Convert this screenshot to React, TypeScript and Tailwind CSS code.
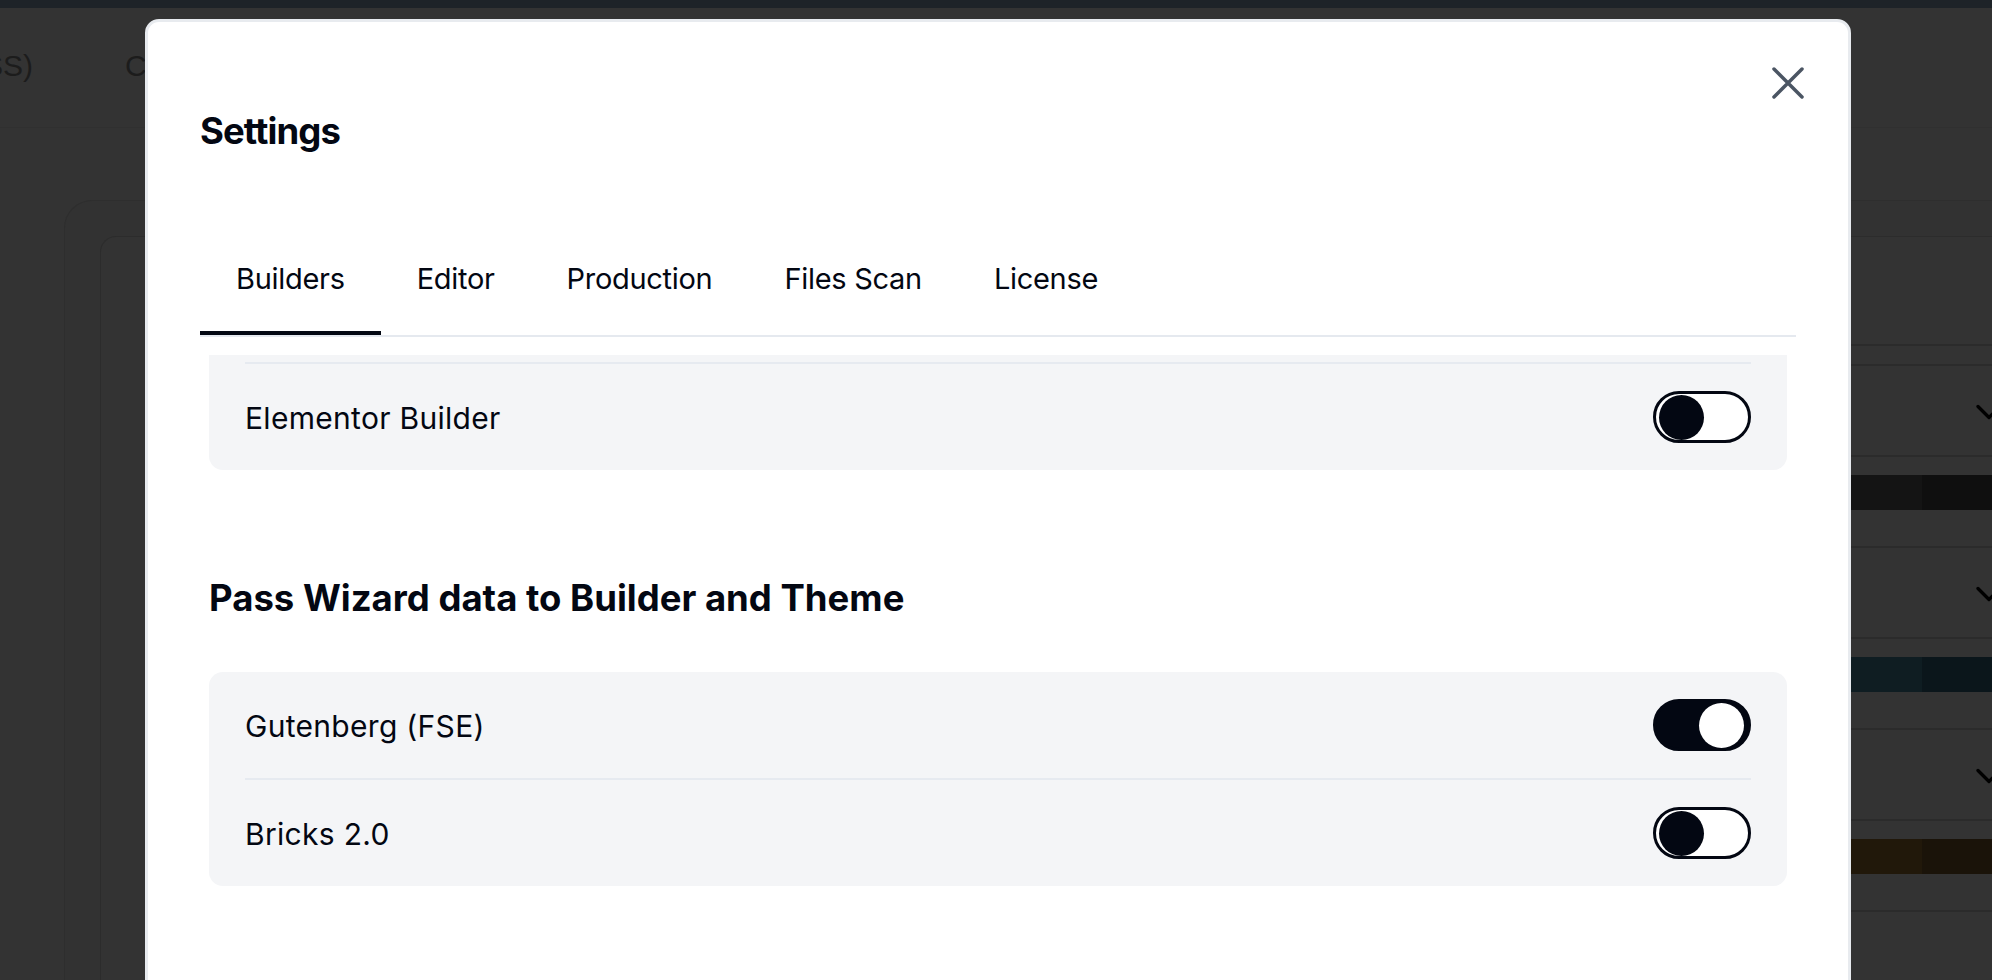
import clsx from "clsx";

const tabs = ["Builders", "Editor", "Production", "Files Scan", "License"];

// swatch strips that peek out to the right of the dialog
const swatchRows = [
  ["#181818", "#141414", "#0f0f0f"],
  ["#12222a", "#0f1d22", "#0b161b"],
  ["#271c0c", "#21180a", "#1a1309"],
];

function Toggle({ on }: { on: boolean }) {
  return (
    <span
      className={clsx(
        "flex h-[52px] w-[98px] shrink-0 items-center rounded-full border-[3px] border-[#030712]",
        on ? "justify-end bg-[#030712] pr-[4px]" : "bg-white pl-[3px]"
      )}
    >
      <span className={clsx("h-[45px] w-[45px] rounded-full", on ? "bg-white" : "bg-[#030712]")} />
    </span>
  );
}

function Row({ label, on }: { label: string; on: boolean }) {
  return (
    <div className="flex h-[106px] items-center justify-between px-[36px]">
      <span className="pt-[2px] text-[30px] leading-[36px] tracking-[0.3px] text-[#030712]">{label}</span>
      <Toggle on={on} />
    </div>
  );
}

const Divider = () => <div className="mx-[36px] h-[2px] bg-[#e6eaf0]" />;

// scrolledPast: the list is scrolled so the card's top edge sits above the viewport
function Card({ rows, scrolledPast }: { rows: { label: string; on: boolean }[]; scrolledPast?: boolean }) {
  return (
    <div className={clsx("bg-[#f4f5f7]", scrolledPast ? "rounded-b-[14px]" : "rounded-[14px]")}>
      {scrolledPast && (
        <>
          <div className="h-[7px]" />
          <Divider />
        </>
      )}
      {rows.map((r, i) => (
        <div key={r.label}>
          {i > 0 && <Divider />}
          <Row label={r.label} on={r.on} />
        </div>
      ))}
    </div>
  );
}

function ChevronDown() {
  return (
    <svg width="44" height="44" viewBox="0 0 24 24" fill="none" stroke="#000" strokeWidth="1.8" strokeLinecap="round" strokeLinejoin="round" className="mr-[-17px]">
      <path d="m6 9 6 6 6-6" />
    </svg>
  );
}

export default function App() {
  return (
    <div className="relative h-[980px] w-full overflow-hidden bg-[#333333] font-['Inter',sans-serif]">
      {/* page underneath the overlay */}
      <div className="h-[8px] bg-[#1e2328]" />
      <div className="flex h-[120px] items-center gap-[92px] border-b border-[#303030] pb-[4px] font-['Liberation_Sans',sans-serif] text-[30px] text-[#1c1c1c]">
        <div className="flex w-[33px] justify-end overflow-hidden whitespace-nowrap">Framework (CSS)</div>
        <div className="whitespace-nowrap">Colors</div>
      </div>
      <div className="pt-[72px]">
        <div className="ml-[64px] mr-[-38px] h-[900px] rounded-tl-[28px] border-l border-t border-[#2e2e2e] bg-[#323232] pt-[35px]">
          <div className="ml-[35px] mr-[36px] h-[900px] rounded-tl-[16px] border-l border-t border-[#2c2c2c] bg-[#333333]">
            <div className="ml-[120px]">
              <div className="h-[109px] border-b-2 border-[#2b2b2b]" />
              <div className="h-[20px] border-b-2 border-[#2b2b2b]" />
              {swatchRows.map((sw, i) => (
                <div key={i}>
                  <div className="flex h-[91px] items-center justify-end border-b-2 border-[#2b2b2b] pt-[2px]">
                    <ChevronDown />
                  </div>
                  <div className="flex h-[91px] items-start justify-end border-b-2 border-[#2b2b2b] pt-[18px]">
                    {sw.map((c) => (
                      <div key={c} className="h-[35px] w-[72px]" style={{ backgroundColor: c }} />
                    ))}
                  </div>
                </div>
              ))}
            </div>
          </div>
        </div>
      </div>

      {/* settings dialog */}
      <div className="absolute left-[145px] top-[19px] h-[1100px] w-[1706px] rounded-[14px] border-[3px] border-[#e8ebef] bg-white">
        <button className="absolute right-[44px] top-[45px]">
          <svg width="32" height="32" viewBox="0 0 32 32" fill="none" stroke="#4b5563" strokeWidth="3.5" strokeLinecap="round">
            <path d="M2 2 30 30M30 2 2 30" />
          </svg>
        </button>
        <div className="px-[52px] pt-[87px]">
          <h2 className="text-[36.5px] font-bold leading-[44px] tracking-tight text-[#030712]">Settings</h2>
          <div className="mt-[108px] flex border-b-2 border-[#e5e9ef]">
            {tabs.map((t, i) => (
              <div
                key={t}
                className={clsx(
                  "px-[36px] pb-[34px] text-[29px] leading-[36px] tracking-[-0.3px] text-[#030712]",
                  i === 0 ? "border-b-4 border-[#030712]" : "border-b-4 border-transparent"
                )}
              >
                {t}
              </div>
            ))}
          </div>
          <div className="mt-[18px] h-[800px] overflow-hidden px-[9px]">
            <Card scrolledPast rows={[{ label: "Elementor Builder", on: false }]} />
            <h3 className="mt-[107px] text-[36.5px] font-bold leading-[42px] text-[#030712]">
              Pass Wizard data to Builder and Theme
            </h3>
            <div className="mt-[53px]">
              <Card
                rows={[
                  { label: "Gutenberg (FSE)", on: true },
                  { label: "Bricks 2.0", on: false },
                ]}
              />
            </div>
          </div>
        </div>
      </div>
    </div>
  );
}
